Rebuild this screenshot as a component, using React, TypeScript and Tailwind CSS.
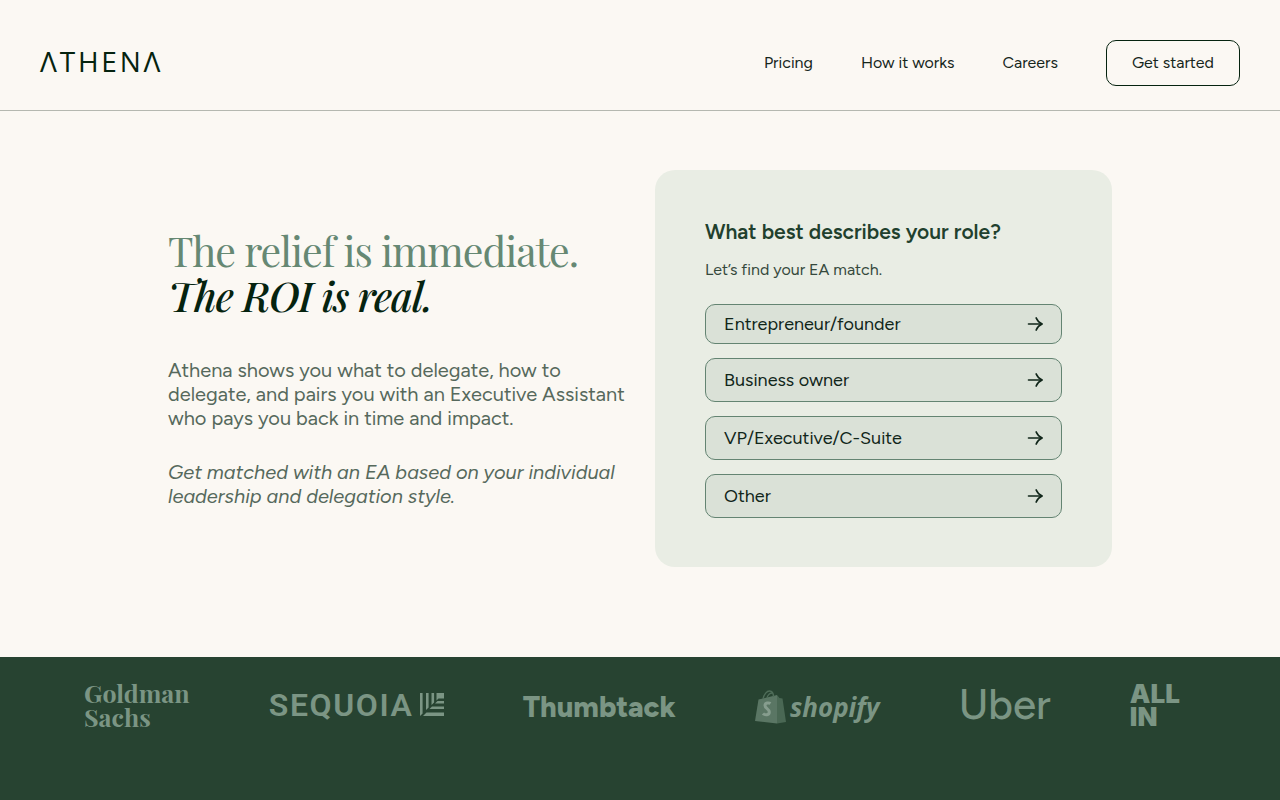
import type { ReactNode } from "react";

/* ---------- Data ---------- */
const NAV_LINKS = [
  { label: "Pricing", href: "#pricing" },
  { label: "How it works", href: "#how-it-works" },
  { label: "Careers", href: "#careers" },
];

const ROLES = ["Entrepreneur/founder", "Business owner", "VP/Executive/C-Suite", "Other"];

/* ---------- Icons ---------- */
function ArrowIcon() {
  return (
    <svg width="16" height="14" viewBox="0 0 16 14" fill="none" stroke="currentColor" strokeLinecap="round" aria-hidden="true">
      <path d="M1.5 7h13" strokeWidth="1.6" />
      <path d="M9.2 1C10.200 3.400 12.300 5.800 15.100 7c-2.800 1.200-4.900 3.600-5.900 6" strokeWidth="1.700" strokeLinejoin="round" />
    </svg>
  );
}

function SequoiaIcon() {
  return (
    <svg width="24" height="24" viewBox="0 0 24 24" fill="currentColor" aria-hidden="true">
      <path d="M0 0h2.600v20.500L0 23z" />
      <path d="M6 0h2.600v14.500L6 17z" />
      <path d="M11.500 0h2.600v9.500L11.500 12z" />
      <path d="M16.500 0H24v5.500h-5.500l-2 2z" />
      <path d="M17.500 8H24v2.600h-9z" />
      <path d="M12 13.500h12v2.600H9.500z" />
      <path d="M6.500 19.500H24V23H3z" />
    </svg>
  );
}

function ShopifyBag() {
  return (
    <svg width="31" height="35" viewBox="0 0 31 35" aria-hidden="true">
      <path d="M3.500 9.500 22 5v28.500L0 31z" fill="#5a7664" />
      <path d="M22 5l2.500 3 3 .5L31 32l-9 1.500z" fill="#4a6854" />
      <path d="M8 9C9 4 12 1 14.500 1c2.500 0 4 2.500 4 6M12 8c.5-3 3-5.500 6-5" fill="none" stroke="#4f6d59" strokeWidth="1.400" />
      <path
        d="M15.500 13.500c-1.500-1-5.500-.8-5.500 2 0 3 4.300 3.200 4.300 6.500 0 3.300-4.300 3.600-6.300 1.500"
        fill="none"
        stroke="#869d8e"
        strokeWidth="3"
      />
    </svg>
  );
}

/* ---------- Brands ---------- */
const BRANDS: { id: string; logo: ReactNode }[] = [
  {
    id: "goldman",
    logo: (
      <span className="block font-['Playfair_Display','Liberation_Serif',serif] text-[25px] leading-6 font-bold">
        Goldman
        <br />
        Sachs
      </span>
    ),
  },
  {
    id: "sequoia",
    logo: (
      <span className="flex items-center gap-1.5 font-['Roboto',sans-serif] text-[32px] leading-8 font-semibold tracking-wider">
        SEQUOIA
        <SequoiaIcon />
      </span>
    ),
  },
  {
    id: "thumbtack",
    logo: <span className="block pt-1 text-[29px] leading-8 font-extrabold">Thumbtack</span>,
  },
  {
    id: "shopify",
    logo: (
      <span className="flex items-center gap-1 pt-1 font-['Open_Sans',sans-serif] text-[26px] leading-8 font-bold italic">
        <ShopifyBag />
        shopify
      </span>
    ),
  },
  {
    id: "uber",
    logo: <span className="block text-[42px] leading-10 font-medium">Uber</span>,
  },
  {
    id: "all-in",
    logo: (
      <span className="block font-['Inter',sans-serif] text-[26px] leading-[23px] font-black">
        ALL
        <br />
        IN
      </span>
    ),
  },
];

/* ---------- Sections ---------- */
function Header() {
  return (
    <header className="flex items-center justify-between border-b border-[#b5b8b0] px-10 pt-10 pb-6">
      <a
        href="#home"
        aria-label="Athena"
        className="pb-1 font-['Open_Sans',sans-serif] text-[28px] leading-8 tracking-widest text-[#05230f]"
      >
        ΛTHENΛ
      </a>
      <nav className="flex items-center gap-12 text-base text-[#16261b]">
        {NAV_LINKS.map((link) => (
          <a key={link.label} href={link.href}>
            {link.label}
          </a>
        ))}
        <a href="#get-started" className="rounded-[10px] border border-[#05230f] px-[25px] py-[10px]">
          Get started
        </a>
      </nav>
    </header>
  );
}

function RoleCard() {
  return (
    <div className="rounded-[20px] bg-[#e9ede4] px-[50px] pt-[50px] pb-[49px]">
      <h2 className="text-[21px] leading-6 font-semibold text-[#21402d]">What best describes your role?</h2>
      <p className="mt-4 text-base leading-5 text-[#36493c]">Let’s find your EA match.</p>
      <div className="mt-6 flex flex-col gap-[14px]">
        {ROLES.map((role) => (
          <button
            key={role}
            type="button"
            className="flex items-center justify-between rounded-[10px] border border-[#648472] bg-[#dae1d7] px-[18px] py-[10px] text-left text-lg leading-[22px] text-[#11261a] first:py-2"
          >
            {role}
            <ArrowIcon />
          </button>
        ))}
      </div>
    </div>
  );
}

function Hero() {
  return (
    <main className="px-6 pt-[59px] pb-[90px]">
      <div className="mx-auto grid max-w-[944px] items-center gap-5 md:grid-cols-[1fr_457px]">
        <div className="pb-0.5">
          <h1 className="font-['Playfair_Display','Liberation_Serif',serif] text-[41px] leading-[45px] tracking-tight whitespace-nowrap text-[#668873] [font-variant-ligatures:none]">
            The relief is immediate.
            <br />
            <em className="font-medium text-[#05230f]">The ROI is real.</em>
          </h1>
          <p className="mt-10 text-xl leading-6 text-[#56695c]">
            Athena shows you what to delegate, how to delegate, and pairs you with an Executive Assistant who pays you
            back in time and impact.
          </p>
          <p className="mt-[30px] text-xl leading-6 text-[#56695c] italic">
            Get matched with an EA based on your individual leadership and delegation style.
          </p>
        </div>
        <RoleCard />
      </div>
    </main>
  );
}

function BrandStrip() {
  return (
    <section className="flex-1 overflow-hidden bg-[#274331] pt-6 pr-25 pl-21 text-[#7b9584]">
      <ul className="flex h-12 items-center justify-between gap-10">
        {BRANDS.map((brand) => (
          <li key={brand.id}>{brand.logo}</li>
        ))}
      </ul>
    </section>
  );
}

export default function App() {
  return (
    <div className="flex min-h-screen flex-col bg-[#fbf8f3] font-['Figtree','Lato',sans-serif]">
      <Header />
      <Hero />
      <BrandStrip />
    </div>
  );
}
